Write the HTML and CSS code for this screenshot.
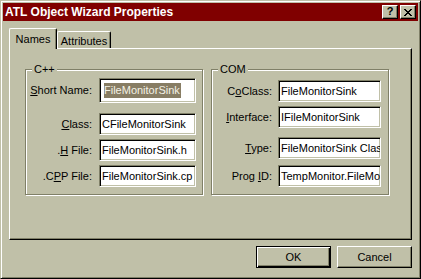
FILE: index.html
```html
<!DOCTYPE html>
<html>
<head>
<meta charset="utf-8">
<link rel="stylesheet" href="styles.css">
</head>
<body>
<div class="window">
  <div class="titlebar">
    <span class="title">ATL Object Wizard Properties</span>
    <div class="tbtns">
      <span class="tbtn help">?</span>
      <span class="tbtn close"><svg width="8" height="7" viewBox="0 0 8 7"><path d="M0 0h2v1h-2zM6 0h2v1h-2zM1 1h2v1h-2zM5 1h2v1h-2zM2 2h4v1h-4zM3 3h2v1h-2zM2 4h4v1h-4zM1 5h2v1h-2zM5 5h2v1h-2zM0 6h2v1h-2zM6 6h2v1h-2z" fill="#000"/></svg></span>
    </div>
  </div>
  <div class="content">
    <div class="tabs">
      <div class="tab sel">Names</div>
      <div class="tab">Attributes</div>
    </div>
    <div class="panel">
      <div class="group cpp">
        <span class="glabel">C++</span>
        <div class="row first">
          <span class="lbl"><u>S</u>hort Name:</span>
          <div class="field tall"><span class="selected">FileMonitorSink</span></div>
        </div>
        <div class="row gap10">
          <span class="lbl"><u>C</u>lass:</span>
          <div class="field">CFileMonitorSink</div>
        </div>
        <div class="row gap4">
          <span class="lbl">.<u>H</u> File:</span>
          <div class="field">FileMonitorSink.h</div>
        </div>
        <div class="row gap4">
          <span class="lbl">.C<u>P</u>P File:</span>
          <div class="field">FileMonitorSink.cp</div>
        </div>
      </div>
      <div class="group com">
        <span class="glabel">COM</span>
        <div class="row first">
          <span class="lbl">C<u>o</u>Class:</span>
          <div class="field">FileMonitorSink</div>
        </div>
        <div class="row gap4">
          <span class="lbl"><u>I</u>nterface:</span>
          <div class="field">IFileMonitorSink</div>
        </div>
        <div class="row gap9">
          <span class="lbl"><u>T</u>ype:</span>
          <div class="field">FileMonitorSink Clas</div>
        </div>
        <div class="row gap6">
          <span class="lbl">Prog <u>I</u>D:</span>
          <div class="field">TempMonitor.FileMo</div>
        </div>
      </div>
    </div>
    <div class="buttons">
      <button class="btn default">OK</button>
      <button class="btn">Cancel</button>
    </div>
  </div>
</div>
</body>
</html>
```
FILE: styles.css
```css
* { box-sizing: border-box; }
html, body { margin: 0; padding: 0; background: #c0c0a8; }
body {
  font-family: "Liberation Sans", Arial, sans-serif;
  font-size: 11px;
  color: #000;
}
.window {
  width: 421px;
  height: 279px;
  background: #c0c0a8;
  border: 1px solid;
  border-color: #c0c0a8 #000 #000 #c0c0a8;
  box-shadow: inset 1px 1px #fff, inset -1px -1px #808068;
  padding: 2px;
  display: flex;
  flex-direction: column;
}
.titlebar {
  height: 18px;
  background: #800000;
  display: flex;
  align-items: center;
  justify-content: space-between;
  padding: 0 2px 0 2px;
}
.title {
  color: #fff;
  font-weight: bold;
  font-size: 12px;
  line-height: 14px;
}
.tbtns { display: flex; gap: 2px; }
.tbtn {
  width: 16px;
  height: 14px;
  background: #c0c0a8;
  border: 1px solid;
  border-color: #fff #000 #000 #fff;
  box-shadow: inset -1px -1px #808068;
  display: flex;
  align-items: center;
  justify-content: center;
}
.help {
  font-weight: bold;
  font-size: 11px;
  line-height: 11px;
  padding-bottom: 1px;
}
.close svg { display: block; margin-top: 0; margin-left: 0; }
.content {
  padding: 7px 6px 0 6px;
  display: flex;
  flex-direction: column;
}
.tabs {
  display: flex;
  align-items: flex-end;
  height: 20px;
}
.tab {
  height: 17px;
  background: #c0c0a8;
  border-top: 1px solid #fff;
  border-left: 1px solid #fff;
  border-right: 1px solid #000;
  border-radius: 2px 2px 0 0;
  box-shadow: inset -1px 0 #808068;
  display: flex;
  align-items: center;
  justify-content: center;
  width: 54px;
  padding-top: 1px;
}
.tab.sel {
  width: 48px;
  height: 21px;
  margin-bottom: -1px;
  position: relative;
  z-index: 1;
  padding-bottom: 2px;
}
.panel {
  width: 403px;
  height: 192px;
  border: 1px solid;
  border-color: #fff #000 #000 #fff;
  box-shadow: inset -1px -1px #808068;
  padding: 20px 0 0 15px;
  display: flex;
  gap: 8px;
  align-items: flex-start;
}
.group {
  position: relative;
  width: 178px;
  height: 126px;
  border: 1px solid #808068;
  box-shadow: inset 1px 1px #fff, 1px 1px #fff;
  padding: 8px 0 0 1px;
}
.com { padding-top: 10px; }
.glabel {
  position: absolute;
  top: -7px;
  left: 6px;
  padding: 0 2px;
  line-height: 13px;
  background: #c0c0a8;
}
.row {
  display: flex;
  align-items: center;
}
.gap4 { margin-top: 4px; }
.gap6 { margin-top: 6px; }
.gap9 { margin-top: 9px; }
.gap10 { margin-top: 10px; }
.lbl {
  text-align: right;
  line-height: 13px;
  white-space: nowrap;
}
.cpp .lbl { width: 65px; margin-right: 7px; }
.com .lbl { width: 59px; margin-right: 6px; }
.field {
  height: 22px;
  background: #fff;
  border: 1px solid;
  border-color: #808068 #fff #fff #808068;
  box-shadow: inset 1px 1px #000, inset -1px -1px #c0c0a8;
  padding: 0 0 0 2px;
  line-height: 20px;
  white-space: nowrap;
  overflow: hidden;
}
.cpp .field { width: 97px; }
.com .field { width: 103px; }
.field.tall {
  height: 25px;
  padding-left: 4px;
  display: flex;
  align-items: center;
}
.selected {
  background: #877d64;
  color: #f4f2e6;
  line-height: 15px;
  padding: 0 1px 0 0;
}
.buttons {
  display: flex;
  justify-content: flex-end;
  gap: 6px;
  margin-top: 6px;
}
.btn {
  width: 75px;
  height: 22px;
  font-family: "Liberation Sans", Arial, sans-serif;
  font-size: 11px;
  color: #000;
  background: #c0c0a8;
  border: 1px solid;
  border-color: #fff #000 #000 #fff;
  box-shadow: inset -1px -1px #808068;
  padding: 0;
  margin: 0;
}
.btn.default {
  border-color: #000;
  box-shadow: inset 1px 1px #fff, inset -1px -1px #000, inset -2px -2px #808068;
}
```
